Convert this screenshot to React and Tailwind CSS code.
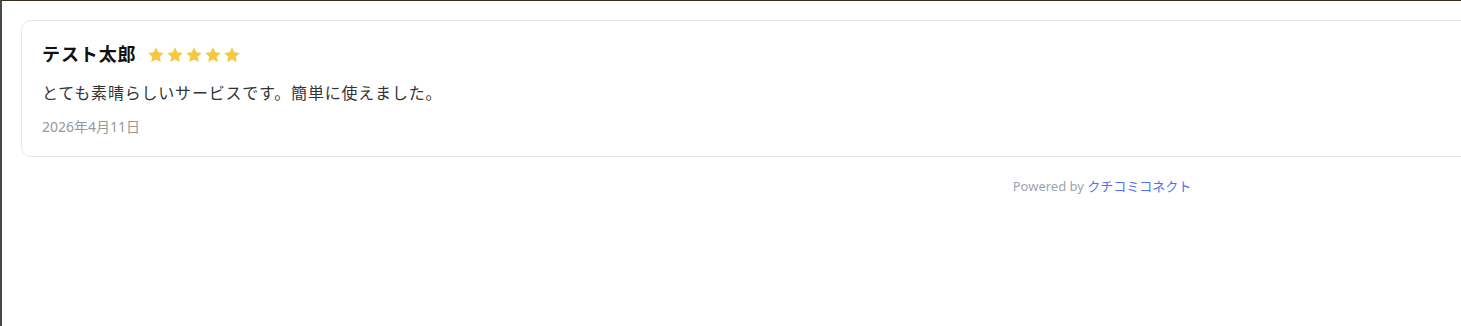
import React from "react";

function Star() {
  return (
    <svg width="18" height="18" viewBox="0 0 24 24" aria-hidden="true">
      <path
        d="M12 1.8l3.1 6.6 7.2.9-5.3 5 1.4 7.1L12 17.9l-6.4 3.5 1.4-7.1-5.3-5 7.2-.9z"
        fill="#f5c842"
      />
    </svg>
  );
}

export default function App() {
  return (
    <div className="min-h-[326px] border-t border-t-[#3b2f1e] border-l-2 border-l-[#4a4a4a] bg-white pl-[19px] pt-[19px] overflow-hidden">
      <div className="w-[2162px]" style={{ fontFamily: '"Noto Sans", "Noto Sans CJK JP", sans-serif' }}>
        <div className="rounded-[10px] border border-[#e5e7eb] bg-white px-5 pt-5 pb-[19px]">
          <div className="flex items-center gap-[10px]">
            <span className="text-[18px] font-bold leading-[27px] tracking-[0.05em] text-[#111]">テスト太郎</span>
            <div className="flex items-center gap-[1px]">
              <Star />
              <Star />
              <Star />
              <Star />
              <Star />
            </div>
          </div>
          <p className="mt-[13px] text-[16px] leading-[24px] tracking-[0.05em] text-[#333]">
            とても素晴らしいサービスです。簡単に使えました。
          </p>
          <p className="mt-[11px] text-[14px] leading-[21px] text-[#999]">2026年4月11日</p>
        </div>
        <div className="mt-[19px] text-center text-[13px] leading-[20px] text-[#9ca3af]">
          Powered by <span className="text-[#4f6ef7]">クチコミコネクト</span>
        </div>
      </div>
    </div>
  );
}
